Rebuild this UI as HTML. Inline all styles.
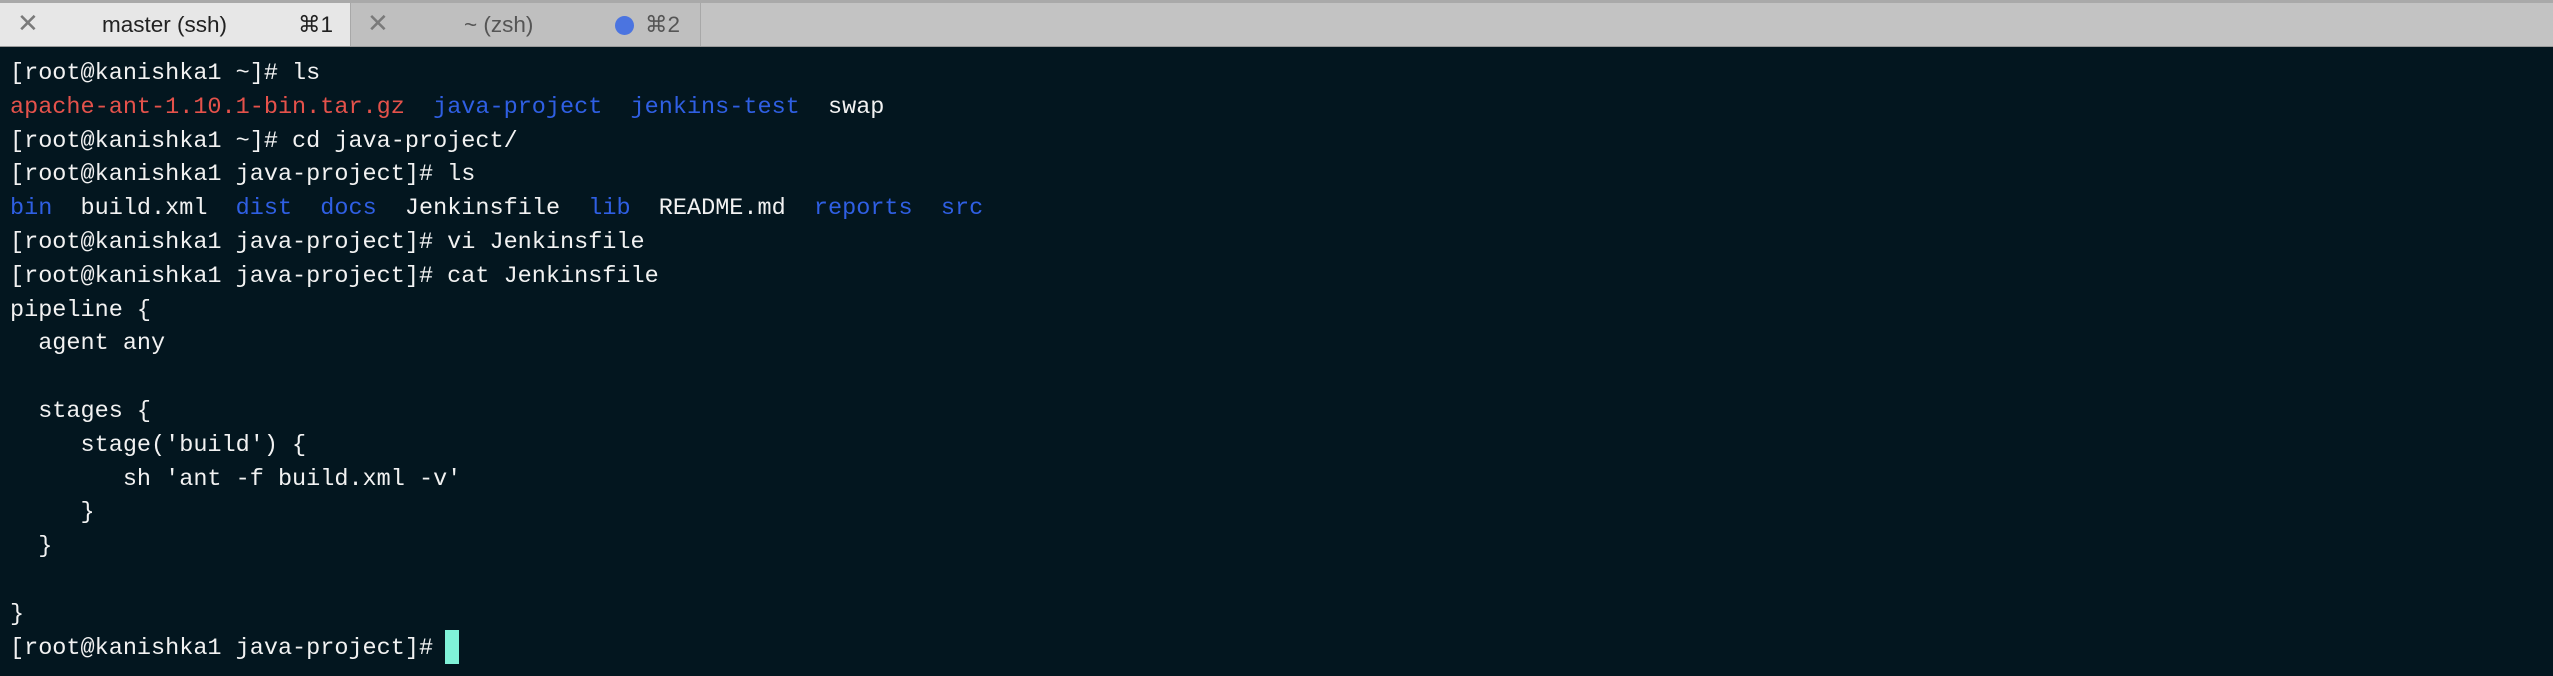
<!DOCTYPE html>
<html><head><meta charset="utf-8"><style>
*{margin:0;padding:0;box-sizing:border-box}
html,body{width:2553px;height:676px;overflow:hidden;background:#03161f}
.bar{position:absolute;left:0;top:0;width:2553px;height:47px;background:#c3c3c3;border-top:3px solid #a9a9a9;border-bottom:1px solid #9a9a9a}
.tab{position:absolute;top:0;height:43px;font-family:"Liberation Sans",sans-serif;font-size:22.5px;color:#222}
.t1{left:0;width:351px;background:#e7e7e7;border-right:1px solid #a8a8a8}
.t2{left:351px;width:350px;background:#bfbfbf;border-right:1px solid #a8a8a8;color:#555}
.tab span{position:absolute;top:9px}
.x{font-size:26px;color:#7a7a7a;top:5px!important}
.dot{position:absolute;left:615px;top:13px;width:19px;height:19px;border-radius:50%;background:#4b74e0}
.term{position:absolute;left:10px;top:57px;font-family:"Liberation Mono",monospace;font-size:23.5px;line-height:33.8px;color:#f2f2f2;white-space:pre}
.r{color:#e5524b}.b{color:#2f5fe3}
.cur{position:absolute;left:445px;top:630px;width:14px;height:34px;background:#80f2d8}
</style></head><body>
<div class="bar">
<div class="tab t1"><span class="x" style="left:17px">✕</span><span style="left:102px">master (ssh)</span><span style="left:298px">⌘1</span></div>
<div class="tab t2"><span class="x" style="left:16px">✕</span><span style="left:113px">~ (zsh)</span><span style="left:294px">⌘2</span></div>
<div class="dot"></div>
</div>
<div class="term">[root@kanishka1 ~]# ls
<span class="r">apache-ant-1.10.1-bin.tar.gz</span>  <span class="b">java-project</span>  <span class="b">jenkins-test</span>  swap
[root@kanishka1 ~]# cd java-project/
[root@kanishka1 java-project]# ls
<span class="b">bin</span>  build.xml  <span class="b">dist</span>  <span class="b">docs</span>  Jenkinsfile  <span class="b">lib</span>  README.md  <span class="b">reports</span>  <span class="b">src</span>
[root@kanishka1 java-project]# vi Jenkinsfile
[root@kanishka1 java-project]# cat Jenkinsfile
pipeline {
  agent any

  stages {
     stage('build') {
        sh 'ant -f build.xml -v'
     }
  }

}
[root@kanishka1 java-project]# </div>
<div class="cur"></div>
</body></html>
